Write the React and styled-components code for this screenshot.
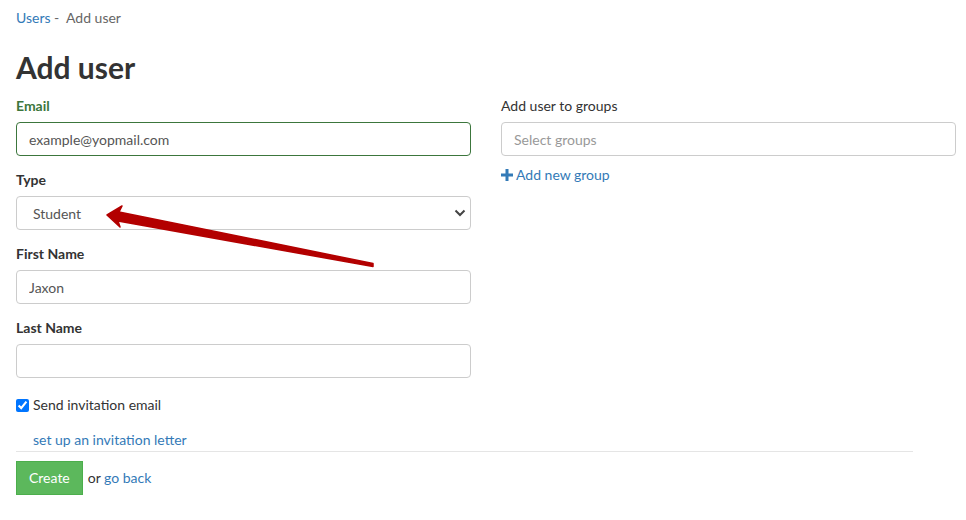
import React from 'react'
import styled, { createGlobalStyle } from 'styled-components'

const GlobalStyle = createGlobalStyle`
  body {
    margin: 0;
    background: #fff;
    font-family: Lato, "Liberation Sans", sans-serif;
    font-size: 14px;
    line-height: 20px;
    color: #333;
  }
`

const Page = styled.div`
  position: relative;
  padding: 8px 16px 24px;
`

const Breadcrumb = styled.div`
  color: #666;
  a {
    color: #337ab7;
    text-decoration: none;
  }
`

const Title = styled.h1`
  margin: 23px 0 12px;
  font-size: 30px;
  line-height: 33px;
  font-weight: 700;
  color: #333;
`

const Columns = styled.div`
  display: grid;
  grid-template-columns: 455px 455px;
  column-gap: 30px;
  align-items: start;
`

const Group = styled.div`
  margin-bottom: 14px;
`

const Label = styled.label`
  display: block;
  margin-bottom: 6px;
  font-weight: ${p => (p.$plain ? 400 : 700)};
  color: ${p => (p.$success ? '#3c763d' : '#333')};
`

const Input = styled.input`
  box-sizing: border-box;
  display: block;
  width: 100%;
  height: 34px;
  padding: 6px 12px;
  font-family: inherit;
  font-size: 14px;
  color: #555;
  background: #fff;
  border: 1px solid ${p => (p.$success ? '#3c763d' : '#ccc')};
  border-radius: 4px;
  outline: none;
  &::placeholder {
    color: #999;
  }
`

const SelectWrap = styled.div`
  position: relative;
`

const Select = styled.select`
  box-sizing: border-box;
  display: block;
  width: 100%;
  height: 34px;
  padding: 6px 16px;
  font-family: inherit;
  font-size: 14px;
  color: #555;
  background: #fff;
  border: 1px solid #ccc;
  border-radius: 4px;
  appearance: none;
  outline: none;
`

const Chevron = styled.svg`
  position: absolute;
  right: 5px;
  top: 13px;
  pointer-events: none;
`

const CheckRow = styled.label`
  display: flex;
  align-items: center;
  gap: 4px;
  margin-top: 17px;
  input {
    margin: 0;
    width: 13px;
    height: 13px;
  }
`

const LetterLink = styled.a`
  display: block;
  margin-top: 15px;
  padding-left: 17px;
  color: #337ab7;
  text-decoration: none;
`

const Footer = styled.div`
  width: 897px;
  margin-top: 1px;
  padding-top: 9px;
  border-top: 1px solid #e5e5e5;
  display: flex;
  align-items: center;
  gap: 5px;
`

const Button = styled.button`
  height: 34px;
  padding: 6px 12px;
  font-family: inherit;
  font-size: 14px;
  line-height: 20px;
  color: #fff;
  background: #5cb85c;
  border: 1px solid #4cae4c;
  border-radius: 0;
`

const Link = styled.a`
  color: #337ab7;
  text-decoration: none;
`

const AddGroup = styled.a`
  display: inline-flex;
  align-items: center;
  gap: 3px;
  margin-top: 9px;
  color: #337ab7;
  text-decoration: none;
`

const Annotation = styled.svg`
  position: absolute;
  left: 0;
  top: 0;
  pointer-events: none;
`

const App = () => (
  <Page>
    <GlobalStyle />
    <Breadcrumb>
      <a href="#">Users</a> - &nbsp;Add user
    </Breadcrumb>
    <Title>Add user</Title>
    <Columns>
      <div>
        <Group>
          <Label $success>Email</Label>
          <Input $success defaultValue="example@yopmail.com" />
        </Group>
        <Group>
          <Label>Type</Label>
          <SelectWrap>
            <Select defaultValue="Student">
              <option>Student</option>
              <option>Teacher</option>
              <option>Admin</option>
            </Select>
            <Chevron width="12" height="8" viewBox="0 0 12 8">
              <path d="M1.5 1.5 L6 6 L10.5 1.5" fill="none" stroke="#444" strokeWidth="2" />
            </Chevron>
          </SelectWrap>
        </Group>
        <Group>
          <Label>First Name</Label>
          <Input defaultValue="Jaxon" />
        </Group>
        <Group>
          <Label>Last Name</Label>
          <Input />
        </Group>
        <CheckRow>
          <input type="checkbox" defaultChecked />
          Send invitation email
        </CheckRow>
        <LetterLink href="#">set up an invitation letter</LetterLink>
      </div>
      <div>
        <Group>
          <Label $plain>Add user to groups</Label>
          <Input placeholder="Select groups" />
          <AddGroup href="#">
            <svg width="12" height="12" viewBox="0 0 12 12">
              <path d="M4.5 0h3v4.5H12v3H7.5V12h-3V7.5H0v-3h4.5z" fill="#337ab7" />
            </svg>
            Add new group
          </AddGroup>
        </Group>
      </div>
    </Columns>
    <Footer>
      <Button>Create</Button>
      <span>
        or <Link href="#">go back</Link>
      </span>
    </Footer>
    <Annotation width="966" height="520" viewBox="0 0 966 520">
      <polygon
        points="107,215 122,206 119,212 373,263.5 373,266.5 118,221 120,227"
        fill="#b30000"
        stroke="#b30000"
        strokeWidth="1.5"
        strokeLinejoin="round"
      />
    </Annotation>
  </Page>
)

export default App
